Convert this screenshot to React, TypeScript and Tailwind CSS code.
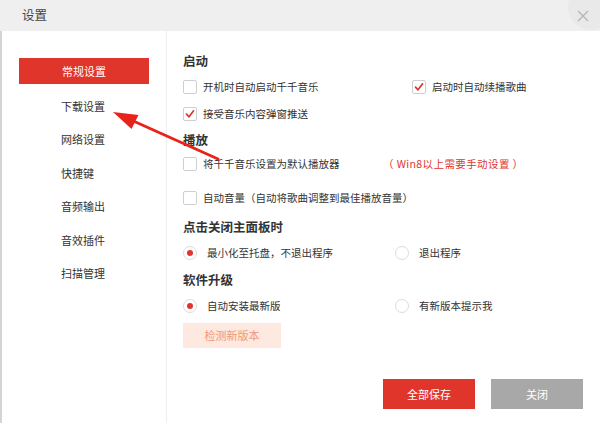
import React from 'react';

const font = { fontFamily: '"Noto Sans CJK SC", "Noto Sans", sans-serif' };

const navItems = ['下载设置', '网络设置', '快捷键', '音频输出', '音效插件', '扫描管理'];

function Checkbox({ checked }: { checked?: boolean }) {
  return (
    <span className="flex h-[14px] w-[14px] shrink-0 items-center justify-center rounded-[2px] border border-[#cfcfcf] bg-white">
      {checked && (
        <svg width="10" height="10" viewBox="0 0 10 10">
          <path d="M1.5 5.2 L4 7.8 L8.6 1.8" fill="none" stroke="#e0352b" strokeWidth="1.7" strokeLinecap="round" strokeLinejoin="round" />
        </svg>
      )}
    </span>
  );
}

function Radio({ checked }: { checked?: boolean }) {
  return (
    <span className="flex h-[14px] w-[14px] shrink-0 items-center justify-center rounded-full border border-[#dcdcdc] bg-white">
      {checked && <span className="h-[6px] w-[6px] rounded-full bg-[#e0352b]" />}
    </span>
  );
}

function CheckRow({ checked, label }: { checked?: boolean; label: string }) {
  return (
    <div className="flex items-center gap-[6px]">
      <Checkbox checked={checked} />
      <span>{label}</span>
    </div>
  );
}

function RadioItem({ checked, label }: { checked?: boolean; label: string }) {
  return (
    <div className="flex items-center gap-[10px]">
      <Radio checked={checked} />
      <span>{label}</span>
    </div>
  );
}

function Heading({ children, className }: { children: React.ReactNode; className: string }) {
  return <div className={`flex h-[18px] items-center text-[12.5px] font-bold ${className}`}>{children}</div>;
}

export default function App() {
  return (
    <div className="relative h-[423px] w-[600px] overflow-hidden bg-white text-[10.5px] text-[#333]" style={font}>
      {/* title bar */}
      <div className="relative flex h-[31px] items-center bg-[#efefef] pl-[22px] text-[12.5px] text-[#444]">
        设置
        <div className="absolute -right-[14px] -top-[16px] flex h-[46px] w-[46px] items-end justify-start rounded-full bg-[#e9e9e9] pb-[8px] pl-[9px]">
          <svg width="12" height="12" viewBox="0 0 12 12">
            <path d="M1 1 L11 11 M11 1 L1 11" stroke="#b5b5b5" strokeWidth="1.3" />
          </svg>
        </div>
      </div>

      <div className="flex h-[392px] border-l-2 border-[#d4d4d4]">
        {/* sidebar */}
        <div className="flex w-[165px] flex-col pl-[17px] pt-[27px] border-r border-[#eeeeee]">
          <div className="mb-[5px] flex h-[26px] w-[130px] items-center justify-center bg-[#e0352b] text-[11px] text-white">
            常规设置
          </div>
          {navItems.map(item => (
            <div key={item} className="flex h-[33.5px] items-center pl-[42px] text-[11px]">
              {item}
            </div>
          ))}
        </div>

        {/* content */}
        <div className="flex flex-1 flex-col pl-[16px] pt-[21px]">
          <Heading className="">启动</Heading>
          <div className="mt-[9px] flex h-[16px] items-center">
            <div className="w-[229px]">
              <CheckRow label="开机时自动启动千千音乐" />
            </div>
            <CheckRow checked label="启动时自动续播歌曲" />
          </div>
          <div className="mt-[11px] flex h-[16px] items-center">
            <CheckRow checked label="接受音乐内容弹窗推送" />
          </div>

          <Heading className="mt-[9px]">播放</Heading>
          <div className="mt-[7px] flex h-[16px] items-center">
            <div className="w-[200px]">
              <CheckRow label="将千千音乐设置为默认播放器" />
            </div>
            <span className="tracking-[0.4px] text-[#e0352b]">（ Win8以上需要手动设置 ）</span>
          </div>
          <div className="mt-[18px] flex h-[16px] items-center">
            <CheckRow label="自动音量（自动将歌曲调整到最佳播放音量）" />
          </div>

          <Heading className="mt-[12px]">点击关闭主面板时</Heading>
          <div className="mt-[9px] flex h-[16px] items-center">
            <div className="w-[212px]">
              <RadioItem checked label="最小化至托盘，不退出程序" />
            </div>
            <RadioItem label="退出程序" />
          </div>

          <Heading className="mt-[10px]">软件升级</Heading>
          <div className="mt-[9px] flex h-[16px] items-center">
            <div className="w-[212px]">
              <RadioItem checked label="自动安装最新版" />
            </div>
            <RadioItem label="有新版本提示我" />
          </div>
          <div className="mt-[9px] flex h-[25px] w-[98px] items-center justify-center bg-[#fde9df] text-[11px] text-[#f0977a]">
            检测新版本
          </div>

          <div className="mt-[31px] flex gap-[16px] pl-[200px]">
            <div className="flex h-[30px] w-[92px] items-center justify-center bg-[#e0352b] text-[11px] text-white">全部保存</div>
            <div className="flex h-[30px] w-[92px] items-center justify-center bg-[#a8a8a8] text-[11px] text-white">关闭</div>
          </div>
        </div>
      </div>

      {/* annotation arrow */}
      <svg className="pointer-events-none absolute left-0 top-0" width="600" height="423">
        <line x1="218" y1="159" x2="130" y2="119.5" stroke="#e8231c" strokeWidth="2.8" strokeLinecap="round" />
        <path d="M113 112 L138.5 115 L131.5 129 Z" fill="#e8231c" />
      </svg>
    </div>
  );
}
